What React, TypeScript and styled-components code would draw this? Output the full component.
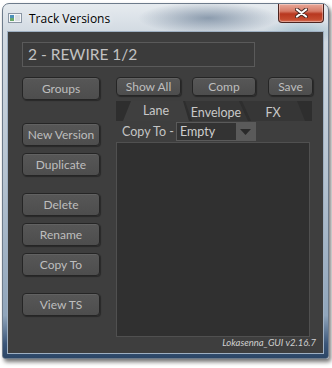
import * as React from "react";
import styled, { createGlobalStyle } from "styled-components";

const GlobalStyle = createGlobalStyle`
  html, body {
    margin: 0;
    padding: 0;
    background: #ffffff;
  }
  body {
    width: 332px;
    height: 368px;
    overflow: hidden;
    font-family: Lato, "Open Sans", sans-serif;
  }
`;

const SWindow = styled.div`
  margin: 3px 0 0 2px;
  width: 327px;
  height: 356px;
  box-sizing: border-box;
  padding: 0 5px 5px 5px;
  display: flex;
  flex-direction: column;
  border: 1px solid #6d7b8b;
  border-radius: 7px 7px 3px 3px;
  background:
    radial-gradient(ellipse 70px 16px at 205px 14px, rgba(60, 85, 115, 0.5), rgba(60, 85, 115, 0)),
    radial-gradient(ellipse 40px 12px at 300px 28px, rgba(120, 170, 190, 0.5), rgba(120, 170, 190, 0)),
    linear-gradient(180deg, #e6ebef 0%, #d2dae2 8%, #b4c2d0 50%, #90a5bb 88%, #3b5679 96%, #2c4666 100%);
  box-shadow: 2px 3px 4px rgba(0, 0, 0, 0.55);
`;

const STitleBar = styled.div`
  height: 28px;
  display: flex;
  align-items: flex-start;
`;

const STitleIcon = styled.svg`
  margin-top: 9px;
  flex: none;
`;

const STitle = styled.div`
  margin: 6px 0 0 7px;
  font-family: "Open Sans", "Noto Sans", sans-serif;
  font-size: 12px;
  line-height: 18px;
  color: #000000;
  text-shadow: 0 0 6px rgba(255, 255, 255, 0.9);
`;

const SClose = styled.div`
  margin-left: auto;
  margin-right: -1px;
  width: 46px;
  height: 19px;
  box-sizing: border-box;
  border: 1px solid #4c2520;
  border-top: none;
  border-radius: 0 0 4px 4px;
  background: linear-gradient(180deg, #e9a899 0%, #d67a66 40%, #b8371f 55%, #c44a2e 85%, #d8735a 100%);
  box-shadow: inset 0 0 0 1px rgba(255, 255, 255, 0.35);
  display: flex;
  align-items: center;
  justify-content: center;
`;

const SClient = styled.div`
  width: 315px;
  height: 321px;
  box-sizing: border-box;
  padding: 10px 0 0 14px;
  background: #3e3e3e;
  box-shadow: 0 0 0 1px #9fb0c2;
  display: flex;
  flex-direction: column;
`;

const SNameField = styled.div`
  width: 233px;
  height: 25px;
  box-sizing: border-box;
  border: 1px solid #5a5a5a;
  background: #3b3b3b;
  padding-left: 5px;
  font-size: 15.5px;
  line-height: 23px;
  color: #c2c2c2;
`;

const SBody = styled.div`
  margin-top: 10px;
  display: flex;
  gap: 16px;
`;

const SLeftCol = styled.div`
  width: 78px;
  display: flex;
  flex-direction: column;
`;

const SButton = styled.div<{ $mt?: number; $ml?: number; $w?: number; $h?: number }>`
  flex: none;
  margin-top: ${(p) => p.$mt || 0}px;
  margin-left: ${(p) => p.$ml || 0}px;
  width: ${(p) => (p.$w ? `${p.$w}px` : "100%")};
  height: ${(p) => p.$h || 23}px;
  box-sizing: border-box;
  border: 1px solid #252525;
  border-radius: 4px;
  background: linear-gradient(180deg, #575757 0%, #4d4d4d 100%);
  box-shadow: inset 0 1px 0 rgba(255, 255, 255, 0.07), 1px 1px 1px rgba(0, 0, 0, 0.35);
  color: #bebebe;
  font-size: 12px;
  display: flex;
  align-items: center;
  justify-content: center;
  white-space: nowrap;
`;

const SRightCol = styled.div`
  width: 196px;
  display: flex;
  flex-direction: column;
`;

const STopRow = styled.div`
  display: flex;
`;

const STabBar = styled.div`
  margin-top: 5px;
  height: 20px;
  width: 196px;
  box-sizing: border-box;
  padding-left: 7px;
  background: #2e2e2e;
  display: flex;
`;

const STab = styled.div<{ $active?: boolean; $w: number; $ml: number; $clip: string }>`
  flex: none;
  width: ${(p) => p.$w}px;
  margin-left: ${(p) => p.$ml}px;
  height: 20px;
  background: ${(p) => (p.$active ? "#3f3f3f" : "#363636")};
  clip-path: ${(p) => p.$clip};
  color: #c8c8c8;
  font-size: 12.5px;
  line-height: ${(p) => (p.$active ? 19 : 23)}px;
  text-align: center;
`;

const SCopyRow = styled.div`
  margin-top: 1px;
  height: 19px;
  display: flex;
  align-items: center;
`;

const SCopyLabel = styled.div`
  width: 60px;
  padding-left: 6px;
  box-sizing: border-box;
  font-size: 12.5px;
  color: #c4c4c4;
`;

const SDropdown = styled.div`
  width: 80px;
  height: 19px;
  box-sizing: border-box;
  border: 1px solid #5a5a5a;
  background: #333333;
  display: flex;
`;

const SDropText = styled.div`
  flex: 1;
  padding-left: 3px;
  font-size: 12.5px;
  line-height: 17px;
  color: #cfcfcf;
`;

const SDropArrow = styled.div`
  width: 19px;
  background: #5a5a5a;
  display: flex;
  align-items: center;
  justify-content: center;
`;

const SListBox = styled.div`
  margin-top: 1px;
  width: 194px;
  height: 195px;
  box-sizing: border-box;
  border: 1px solid #505050;
  background: #303030;
`;

const SFooter = styled.div`
  padding-right: 7px;
  text-align: right;
  font-size: 9.5px;
  font-style: italic;
  line-height: 12px;
  color: #cfcfcf;
`;

export default function App() {
  return (
    <>
      <GlobalStyle />
      <SWindow>
        <STitleBar>
          <STitleIcon width="14" height="10" viewBox="0 0 14 10">
            <rect x="0.5" y="0.5" width="13" height="9" fill="#f4f6f8" stroke="#8a96a4" />
            <rect x="2" y="2" width="4" height="6" fill="#4c8fb8" />
            <rect x="2" y="5" width="4" height="3" fill="#6aa86a" />
            <rect x="7" y="2" width="5" height="6" fill="#d8dde2" />
          </STitleIcon>
          <STitle>Track Versions</STitle>
          <SClose>
            <svg width="13" height="10" viewBox="0 0 13 10">
              <path d="M2 1.5 L11 8.5 M11 1.5 L2 8.5" stroke="#4a2a24" strokeWidth="4" strokeLinecap="round" />
              <path d="M2 1.5 L11 8.5 M11 1.5 L2 8.5" stroke="#ffffff" strokeWidth="2.2" strokeLinecap="round" />
            </svg>
          </SClose>
        </STitleBar>
        <SClient>
          <SNameField>2 - REWIRE 1/2</SNameField>
          <SBody>
            <SLeftCol>
              <SButton>Groups</SButton>
              <SButton $mt={23}>New Version</SButton>
              <SButton $mt={7}>Duplicate</SButton>
              <SButton $mt={17}>Delete</SButton>
              <SButton $mt={7}>Rename</SButton>
              <SButton $mt={7}>Copy To</SButton>
              <SButton $mt={17}>View TS</SButton>
            </SLeftCol>
            <SRightCol>
              <STopRow>
                <SButton $w={65} $h={19}>Show All</SButton>
                <SButton $w={64} $h={19} $ml={11}>Comp</SButton>
                <SButton $w={45} $h={19} $ml={12}>Save</SButton>
              </STopRow>
              <STabBar>
                <STab $active $w={66} $ml={0} $clip="polygon(8px 0, 60px 0, 66px 100%, 0 100%)">Lane</STab>
                <STab $w={64} $ml={-5} $clip="polygon(1px 0, 55px 0, 64px 100%, 8px 100%)">Envelope</STab>
                <STab $w={64} $ml={-7} $clip="polygon(1px 0, 56px 0, 64px 100%, 10px 100%)">FX</STab>
              </STabBar>
              <SCopyRow>
                <SCopyLabel>Copy To -</SCopyLabel>
                <SDropdown>
                  <SDropText>Empty</SDropText>
                  <SDropArrow>
                    <svg width="11" height="6" viewBox="0 0 11 6">
                      <path d="M0 0 L11 0 L5.5 6 Z" fill="#2a2a2a" />
                    </svg>
                  </SDropArrow>
                </SDropdown>
              </SCopyRow>
              <SListBox />
            </SRightCol>
          </SBody>
          <SFooter>Lokasenna_GUI v2.16.7</SFooter>
        </SClient>
      </SWindow>
    </>
  );
}
